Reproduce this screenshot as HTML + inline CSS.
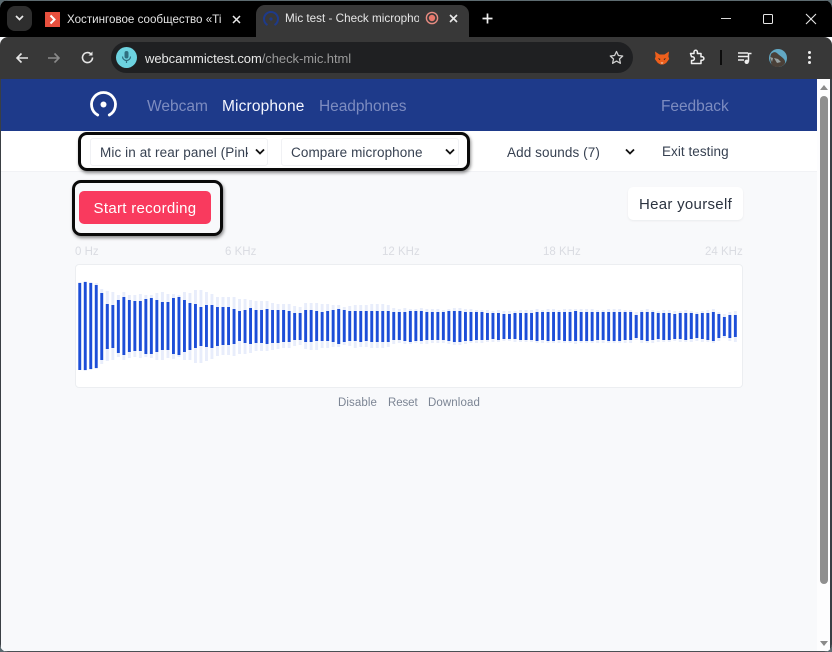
<!DOCTYPE html>
<html><head><meta charset="utf-8"><title>Mic test</title>
<style>
*{box-sizing:border-box}
html,body{margin:0;padding:0;width:832px;height:652px;overflow:hidden;background:#5a6a70}
body{position:relative;font-family:"Liberation Sans","Noto Sans CJK SC",sans-serif}
.a{position:absolute;white-space:nowrap}
#win{position:absolute;left:0;top:0;width:832px;height:652px;border-radius:8px;overflow:hidden;background:#f8f9fb;filter:blur(.3px)}
.bars{position:absolute;left:77.245px;top:265px;height:122px;width:6700px;display:flex;align-items:center;transform:scaleX(.1);transform-origin:0 0}
.bars i{display:block;flex:0 0 55.1px;position:relative}
.bars i::after{content:"";position:absolute;left:13px;right:13px;top:0;bottom:0}
.l i::after{background:#e8edfb}
.d i::after{background:#1d4ed8}
.box{position:absolute;border:3px solid #0a0a0a;border-radius:9px;box-shadow:1px 2px 3px rgba(0,0,0,.45)}
.sel{position:absolute;background:#fff;border:1px solid #f0f1f4;border-radius:3px;height:28px}
.t{color:#374151;font-size:13.5px}
</style></head><body>
<div id="win">
<!-- tab strip -->
<div class="a" style="left:0;top:0;width:832px;height:37px;background:#000"></div>
<div class="a" style="left:0;top:0;width:832px;height:1px;background:#5d6b70"></div>
<div class="a" style="left:0;top:37px;width:832px;height:42px;background:#383838;border-radius:8px 8px 0 0"></div>
<div class="a" style="left:7px;top:6px;width:25px;height:25px;border-radius:8px;background:#2e2e2e"></div>
<svg class="a" style="left:14px;top:14px" width="11" height="8"><path d="M2 2l3.500 3.500L9 2" fill="none" stroke="#e8e8e8" stroke-width="1.700"/></svg>
<div class="a" style="left:45px;top:12px;width:15px;height:15px;background:#e8503e"></div>
<svg class="a" style="left:45px;top:12px" width="15" height="15"><path d="M5.500 3.500l4 4-4 4" fill="none" stroke="#fff" stroke-width="2"/></svg>
<div class="a" style="left:67px;top:12px;width:154px;overflow:hidden;color:#e3e3e3;font-size:11.600px;line-height:15px">Хостинговое сообщество «Timeweb</div>
<svg class="a" style="left:231px;top:14px" width="11" height="11"><path d="M2 2l7 7M9 2l-7 7" stroke="#e8e8e8" stroke-width="1.500"/></svg>
<!-- active tab -->
<div class="a" style="left:256px;top:5px;width:213px;height:34px;background:#383838;border-radius:9px 9px 0 0"></div>
<svg class="a" style="left:262px;top:10px" width="18" height="18"><path d="M5.500 15A7 7 0 1 1 12.500 15" fill="none" stroke="#1e3a8a" stroke-width="2"/><circle cx="9" cy="9" r="1.600" fill="#1e3a8a"/></svg>
<div class="a" style="left:285px;top:11px;width:134px;overflow:hidden;color:#e6e6e6;font-size:11.700px;line-height:15px">Mic test - Check microphone</div>
<svg class="a" style="left:424px;top:10px" width="16" height="16"><circle cx="8" cy="8" r="5.600" fill="none" stroke="#e88c82" stroke-width="1.400"/><circle cx="8" cy="8" r="3.200" fill="#e8786c"/></svg>
<svg class="a" style="left:448px;top:13px" width="11" height="11"><path d="M2 2l7 7M9 2l-7 7" stroke="#e8e8e8" stroke-width="1.600"/></svg>
<svg class="a" style="left:481px;top:12px" width="13" height="13"><path d="M6.500 1.500v10M1.500 6.500h10" stroke="#f0f0f0" stroke-width="1.700"/></svg>
<!-- window controls -->
<div class="a" style="left:721px;top:18px;width:10px;height:1px;background:#d8d8d8"></div>
<div class="a" style="left:763px;top:14px;width:10px;height:10px;border:1.200px solid #e6e6e6;border-radius:1.500px"></div>
<svg class="a" style="left:805px;top:13px" width="12" height="12"><path d="M1 1l10 10M11 1L1 11" stroke="#e6e6e6" stroke-width="1.100"/></svg>
<!-- toolbar -->
<svg class="a" style="left:14px;top:50px" width="16" height="16"><path d="M14 8H3M7.500 3.500L3 8l4.500 4.500" fill="none" stroke="#e6e6e6" stroke-width="1.600"/></svg>
<svg class="a" style="left:46px;top:50px" width="16" height="16"><path d="M2 8h11M8.500 3.500L13 8l-4.500 4.500" fill="none" stroke="#8a8a8a" stroke-width="1.600"/></svg>
<svg class="a" style="left:79px;top:49px" width="17" height="17"><path d="M13.500 8.500A5 5 0 1 1 12 5" fill="none" stroke="#e6e6e6" stroke-width="1.600"/><path d="M13.500 2.500v4h-4z" fill="#e6e6e6"/></svg>
<div class="a" style="left:111px;top:42px;width:522px;height:31px;border-radius:16px;background:#1f2022"></div>
<div class="a" style="left:116px;top:47px;width:21px;height:21px;border-radius:50%;background:#6dd3e0"></div>
<svg class="a" style="left:120px;top:50px" width="13" height="15"><rect x="4.500" y="1" width="4" height="7.500" rx="2" fill="#2f6f80"/><path d="M2.500 6.500a4 4 0 0 0 8 0M6.500 10.500V13" fill="none" stroke="#2f6f80" stroke-width="1.200"/></svg>
<div class="a" style="left:145px;top:51px;font-size:13px;line-height:15px;color:#e8e8e8;letter-spacing:-.06px">webcammictest.com<span style="color:#9a9a9a">/check-mic.html</span></div>
<svg class="a" style="left:608px;top:49px" width="17" height="17"><path d="M8.500 2.500l1.900 4 4.300.5-3.200 3 .9 4.300-3.900-2.200-3.900 2.200.9-4.300-3.200-3 4.300-.5z" fill="none" stroke="#cfcfcf" stroke-width="1.300" stroke-linejoin="round"/></svg>
<svg class="a" style="left:654px;top:50px" width="16" height="16"><path d="M1 1.500l4.500 3h5L15 1.500l-.6 5 .8 2.500-3 4-2.700 1.500H6.500L3.800 13l-3-4 .8-2.500z" fill="#ee5f1c"/><path d="M4 8l2.500 1-1 1.200zM12 8l-2.500 1 1 1.200z" fill="#3a2a20"/><path d="M6.500 12.500h3L8 14z" fill="#f4d9c0"/></svg>
<svg class="a" style="left:688px;top:49px" width="17" height="17"><path d="M2.500 4.500h3.500V3a1.700 1.700 0 0 1 3.400 0v1.500h3.600v3.300h1.200a1.700 1.700 0 0 1 0 3.400h-1.200v3.300H3.500v-3h1a1.900 1.900 0 0 0 0-3.800h-1z" fill="none" stroke="#f0f0f0" stroke-width="1.500" stroke-linejoin="round"/></svg>
<div class="a" style="left:720px;top:50px;width:1.500px;height:15px;background:#0c0c0c"></div>
<svg class="a" style="left:737px;top:50px" width="16" height="16"><path d="M1 3h10M1 6.500h10M1 10h6" stroke="#eee" stroke-width="1.500"/><path d="M11.500 11.500V3.500h3" fill="none" stroke="#eee" stroke-width="1.500"/><circle cx="9.700" cy="11.800" r="2.200" fill="#eee"/></svg>
<svg class="a" style="left:769px;top:49px" width="18" height="18"><circle cx="9" cy="9" r="9" fill="#62a8c4"/><path d="M2 5c3-3 5-2 7 0s6 4 7 7-3 6-7 6-6-1-7-4-1-6 0-9z" fill="#4a4038"/><path d="M5 9l4 1 3 3-4 1zM1 8l3 1-1 4z" fill="#98a0a0"/></svg>
<svg class="a" style="left:807px;top:50px" width="5" height="15"><circle cx="2.500" cy="2.500" r="1.500" fill="#eee"/><circle cx="2.500" cy="7.500" r="1.500" fill="#eee"/><circle cx="2.500" cy="12.500" r="1.500" fill="#eee"/></svg>
<!-- page -->
<div class="a" style="left:0;top:79px;width:819px;height:573px;background:#f8f9fb"></div>
<div class="a" style="left:0;top:79px;width:819px;height:52px;background:#1e3a8a"></div>
<svg class="a" style="left:89px;top:90px" width="29" height="29"><path d="M8.700 25A12 12 0 1 1 20.300 25" fill="none" stroke="#fff" stroke-width="2.800" stroke-linecap="round"/><circle cx="14.500" cy="14.500" r="3" fill="#fff"/></svg>
<div class="a" style="left:147px;top:98px;font-size:15.500px;line-height:18px;color:#7d8cc0;letter-spacing:0">Webcam</div>
<div class="a" style="left:222px;top:98px;font-size:15.500px;line-height:18px;color:#f4f6ff;letter-spacing:.15px">Microphone</div>
<div class="a" style="left:319px;top:98px;font-size:15.500px;line-height:18px;color:#7d8cc0;letter-spacing:-.05px">Headphones</div>
<div class="a" style="left:661px;top:98px;font-size:15.500px;line-height:18px;color:#7d8cc0;letter-spacing:-.05px">Feedback</div>
<div class="a" style="left:0;top:131px;width:819px;height:41px;background:#fff;border-bottom:1px solid #f1f2f5"></div>
<div class="sel" style="left:90px;top:138px;width:178px"></div>
<div class="a t" style="left:100px;top:145px;width:148px;overflow:hidden;line-height:16px;letter-spacing:.1px">Mic in at rear panel (Pink)</div>
<svg class="a" style="left:254px;top:148px" width="12" height="8"><path d="M2 1.500l4 4 4-4" fill="none" stroke="#111" stroke-width="1.800"/></svg>
<div class="sel" style="left:281px;top:138px;width:178px"></div>
<div class="a t" style="left:291px;top:145px;line-height:16px;letter-spacing:.1px">Compare microphone</div>
<svg class="a" style="left:444px;top:148px" width="12" height="8"><path d="M2 1.500l4 4 4-4" fill="none" stroke="#111" stroke-width="1.800"/></svg>
<div class="box" style="left:78px;top:132px;width:392px;height:39px"></div>
<div class="a t" style="left:507px;top:145px;line-height:16px;letter-spacing:.1px">Add sounds (7)</div>
<svg class="a" style="left:624px;top:148px" width="12" height="8"><path d="M2 1.500l4 4 4-4" fill="none" stroke="#111" stroke-width="1.800"/></svg>
<div class="a t" style="left:662px;top:144px;line-height:16px;letter-spacing:.05px">Exit testing</div>
<div class="box" style="left:72px;top:180px;width:151px;height:56px"></div>
<div class="a" style="left:79px;top:191px;width:132px;height:33px;border-radius:5px;background:#f93a5e;color:#fff;font-size:15px;line-height:35px;text-align:center;letter-spacing:.3px">Start recording</div>
<div class="a" style="left:628px;top:187px;width:115px;height:33px;border-radius:5px;background:#fff;box-shadow:0 1px 2px rgba(0,0,0,.06);color:#2b3340;font-size:15px;line-height:35px;text-align:center;letter-spacing:.3px">Hear yourself</div>
<div class="a" style="left:75px;top:246px;font-size:11.500px;line-height:13px;color:#dadce2">0 Hz</div>
<div class="a" style="left:225px;top:246px;font-size:11.500px;line-height:13px;color:#dadce2">6 KHz</div>
<div class="a" style="left:382px;top:246px;font-size:11.500px;line-height:13px;color:#dadce2">12 KHz</div>
<div class="a" style="left:543px;top:246px;font-size:11.500px;line-height:13px;color:#dadce2">18 KHz</div>
<div class="a" style="left:705px;top:246px;font-size:11.500px;line-height:13px;color:#dadce2">24 KHz</div>
<div class="a" style="left:75px;top:264px;width:668px;height:124px;background:#fff;border:1px solid #eceef1;border-radius:4px"></div>
<div class="bars l"><i style="height:88px"></i><i style="height:90px"></i><i style="height:88px"></i><i style="height:86px"></i><i style="height:75px"></i><i style="height:70px"></i><i style="height:68px"></i><i style="height:62px"></i><i style="height:68px"></i><i style="height:63px"></i><i style="height:62px"></i><i style="height:64px"></i><i style="height:62px"></i><i style="height:63px"></i><i style="height:67px"></i><i style="height:68px"></i><i style="height:64px"></i><i style="height:65px"></i><i style="height:62px"></i><i style="height:68px"></i><i style="height:67px"></i><i style="height:73px"></i><i style="height:73px"></i><i style="height:69px"></i><i style="height:65px"></i><i style="height:59px"></i><i style="height:58px"></i><i style="height:58px"></i><i style="height:59px"></i><i style="height:55px"></i><i style="height:55px"></i><i style="height:53px"></i><i style="height:50px"></i><i style="height:50px"></i><i style="height:50px"></i><i style="height:47px"></i><i style="height:45px"></i><i style="height:44px"></i><i style="height:44px"></i><i style="height:40px"></i><i style="height:38px"></i><i style="height:46px"></i><i style="height:47px"></i><i style="height:47px"></i><i style="height:44px"></i><i style="height:44px"></i><i style="height:42px"></i><i style="height:42px"></i><i style="height:38px"></i><i style="height:40px"></i><i style="height:43px"></i><i style="height:42px"></i><i style="height:42px"></i><i style="height:44px"></i><i style="height:44px"></i><i style="height:44px"></i><i style="height:42px"></i><i style="height:36px"></i><i style="height:34px"></i><i style="height:36px"></i><i style="height:35px"></i><i style="height:34px"></i><i style="height:36px"></i><i style="height:35px"></i><i style="height:34px"></i><i style="height:34px"></i><i style="height:33px"></i><i style="height:35px"></i><i style="height:37px"></i><i style="height:37px"></i><i style="height:35px"></i><i style="height:34px"></i><i style="height:33px"></i><i style="height:33px"></i><i style="height:32px"></i><i style="height:31px"></i><i style="height:32px"></i><i style="height:30px"></i><i style="height:30px"></i><i style="height:31px"></i><i style="height:32px"></i><i style="height:32px"></i><i style="height:32px"></i><i style="height:34px"></i><i style="height:33px"></i><i style="height:34px"></i><i style="height:34px"></i><i style="height:33px"></i><i style="height:34px"></i><i style="height:34px"></i><i style="height:35px"></i><i style="height:34px"></i><i style="height:34px"></i><i style="height:34px"></i><i style="height:33px"></i><i style="height:33px"></i><i style="height:34px"></i><i style="height:34px"></i><i style="height:34px"></i><i style="height:33px"></i><i style="height:33px"></i><i style="height:28px"></i><i style="height:33px"></i><i style="height:34px"></i><i style="height:33px"></i><i style="height:31px"></i><i style="height:32px"></i><i style="height:32px"></i><i style="height:30px"></i><i style="height:31px"></i><i style="height:32px"></i><i style="height:31px"></i><i style="height:29px"></i><i style="height:31px"></i><i style="height:32px"></i><i style="height:34px"></i><i style="height:29px"></i><i style="height:24px"></i><i style="height:29px"></i><i style="height:31px"></i></div>
<div class="bars d"><i style="height:87px"></i><i style="height:88px"></i><i style="height:86px"></i><i style="height:83px"></i><i style="height:67px"></i><i style="height:45px"></i><i style="height:43px"></i><i style="height:53px"></i><i style="height:58px"></i><i style="height:52px"></i><i style="height:50px"></i><i style="height:50px"></i><i style="height:55px"></i><i style="height:56px"></i><i style="height:52px"></i><i style="height:48px"></i><i style="height:48px"></i><i style="height:56px"></i><i style="height:58px"></i><i style="height:52px"></i><i style="height:47px"></i><i style="height:44px"></i><i style="height:39px"></i><i style="height:42px"></i><i style="height:43px"></i><i style="height:39px"></i><i style="height:38px"></i><i style="height:38px"></i><i style="height:35px"></i><i style="height:30px"></i><i style="height:33px"></i><i style="height:36px"></i><i style="height:33px"></i><i style="height:33px"></i><i style="height:35px"></i><i style="height:33px"></i><i style="height:33px"></i><i style="height:32px"></i><i style="height:31px"></i><i style="height:27px"></i><i style="height:27px"></i><i style="height:32px"></i><i style="height:32px"></i><i style="height:30px"></i><i style="height:29px"></i><i style="height:30px"></i><i style="height:32px"></i><i style="height:35px"></i><i style="height:32px"></i><i style="height:30px"></i><i style="height:30px"></i><i style="height:31px"></i><i style="height:30px"></i><i style="height:31px"></i><i style="height:31px"></i><i style="height:31px"></i><i style="height:31px"></i><i style="height:28px"></i><i style="height:28px"></i><i style="height:29px"></i><i style="height:31px"></i><i style="height:30px"></i><i style="height:30px"></i><i style="height:28px"></i><i style="height:28px"></i><i style="height:28px"></i><i style="height:28px"></i><i style="height:30px"></i><i style="height:31px"></i><i style="height:31px"></i><i style="height:29px"></i><i style="height:29px"></i><i style="height:28px"></i><i style="height:28px"></i><i style="height:27px"></i><i style="height:26px"></i><i style="height:27px"></i><i style="height:25px"></i><i style="height:25px"></i><i style="height:26px"></i><i style="height:27px"></i><i style="height:27px"></i><i style="height:27px"></i><i style="height:29px"></i><i style="height:28px"></i><i style="height:29px"></i><i style="height:29px"></i><i style="height:28px"></i><i style="height:29px"></i><i style="height:29px"></i><i style="height:30px"></i><i style="height:29px"></i><i style="height:29px"></i><i style="height:29px"></i><i style="height:28px"></i><i style="height:28px"></i><i style="height:29px"></i><i style="height:29px"></i><i style="height:29px"></i><i style="height:28px"></i><i style="height:28px"></i><i style="height:23px"></i><i style="height:28px"></i><i style="height:29px"></i><i style="height:28px"></i><i style="height:26px"></i><i style="height:27px"></i><i style="height:27px"></i><i style="height:25px"></i><i style="height:26px"></i><i style="height:27px"></i><i style="height:26px"></i><i style="height:24px"></i><i style="height:26px"></i><i style="height:27px"></i><i style="height:29px"></i><i style="height:24px"></i><i style="height:19px"></i><i style="height:23px"></i><i style="height:22px"></i></div>
<div class="a" style="left:338px;top:397px;font-size:11.500px;line-height:13px;color:#7c8594;letter-spacing:.1px">Disable</div>
<div class="a" style="left:388px;top:397px;font-size:11.500px;line-height:13px;color:#7c8594;letter-spacing:-.1px">Reset</div>
<div class="a" style="left:428px;top:397px;font-size:11.500px;line-height:13px;color:#7c8594;letter-spacing:.1px">Download</div>
<!-- scrollbar -->
<div class="a" style="left:817px;top:79px;width:13px;height:573px;background:#fdfdfe"></div>
<svg class="a" style="left:819px;top:84px" width="10" height="8"><path d="M5 1l4 5H1z" fill="#8a8a8a"/></svg>
<div class="a" style="left:820px;top:96px;width:8px;height:488px;border-radius:4px;background:#8f8f8f"></div>
<svg class="a" style="left:819px;top:640px" width="10" height="8"><path d="M1 1h8L5 6z" fill="#8a8a8a"/></svg>
<div class="a" style="left:830px;top:79px;width:2px;height:573px;background:#3a3f44"></div>
<div class="a" style="left:0;top:79px;width:1px;height:573px;background:#3a3f44"></div>
<div class="a" style="left:0;top:651px;width:832px;height:1px;background:#4a4f54"></div>
</div>
</body></html>
